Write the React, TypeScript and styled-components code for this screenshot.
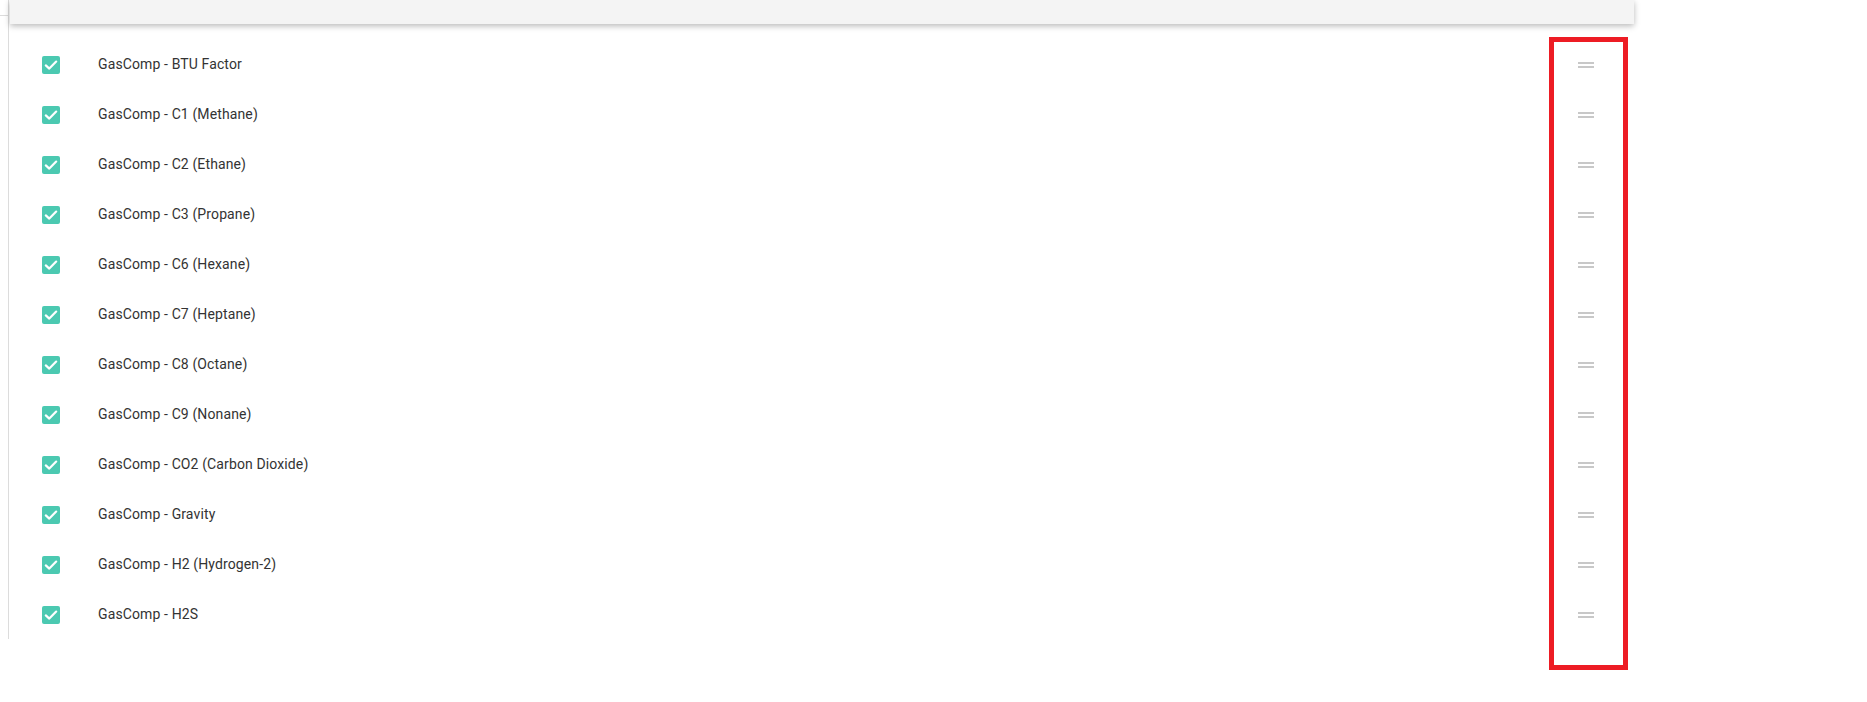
import React from "react";
import styled, { createGlobalStyle } from "styled-components";

const GlobalStyle = createGlobalStyle`
  html, body { margin: 0; padding: 0; background: #ffffff; }
  body { font-family: Roboto, "Liberation Sans", Arial, sans-serif; }
`;

const Page = styled.div`
  position: relative;
  display: flex;
  width: 1867px;
  height: 702px;
`;

const Gutter = styled.div`
  position: relative;
  width: 8px;
  height: 639px;
  border-right: 1px solid #dcdcdc;
  margin-right: 1px;
  flex-shrink: 0;
`;

const GutterTick = styled.div`
  margin-top: 15px;
  height: 1px;
  background: #dcdcdc;
`;

const Panel = styled.div`
  width: 1624px;
  display: flex;
  flex-direction: column;
`;

const Header = styled.div`
  height: 24px;
  background: #f4f4f4;
  box-shadow: 0 2px 6px rgba(0, 0, 0, 0.28);
  position: relative;
  z-index: 1;
`;

const List = styled.ul`
  list-style: none;
  margin: 0;
  padding: 16px 0 0 0;
`;

const Row = styled.li`
  height: 50px;
  display: flex;
  align-items: center;
  padding: 0 40px 0 32px;
`;

const Box = styled.span`
  width: 18px;
  height: 18px;
  border-radius: 2px;
  background: #4bc9b1;
  display: flex;
  align-items: center;
  justify-content: center;
  flex-shrink: 0;
`;

const Label = styled.span`
  margin-left: 38px;
  flex: 1;
  font-size: 14px;
  line-height: 16px;
  padding-bottom: 3px;
  letter-spacing: 0.12px;
  color: #333333;
`;

const Handle = styled.span`
  width: 16px;
  display: flex;
  flex-direction: column;
  gap: 2px;
`;

const HandleBar = styled.span`
  display: block;
  height: 2px;
  background: #c8c8c8;
`;

const Highlight = styled.div`
  position: absolute;
  left: 1549px;
  top: 37px;
  width: 79px;
  height: 633px;
  box-sizing: border-box;
  border: 5px solid #ed1c24;
  pointer-events: none;
`;

const items = [
  "GasComp - BTU Factor",
  "GasComp - C1 (Methane)",
  "GasComp - C2 (Ethane)",
  "GasComp - C3 (Propane)",
  "GasComp - C6 (Hexane)",
  "GasComp - C7 (Heptane)",
  "GasComp - C8 (Octane)",
  "GasComp - C9 (Nonane)",
  "GasComp - CO2 (Carbon Dioxide)",
  "GasComp - Gravity",
  "GasComp - H2 (Hydrogen-2)",
  "GasComp - H2S",
];

const Check = () => (
  <svg width="18" height="18" viewBox="0 0 18 18">
    <path
      d="M3.8 9.4 L7.3 12.6 L14.2 5.6"
      fill="none"
      stroke="#ffffff"
      strokeWidth="2.2"
      strokeLinecap="round"
      strokeLinejoin="round"
    />
  </svg>
);

export default function App() {
  return (
    <>
      <GlobalStyle />
      <Page>
        <Gutter>
          <GutterTick />
        </Gutter>
        <Panel>
          <Header />
          <List>
            {items.map((t) => (
              <Row key={t}>
                <Box>
                  <Check />
                </Box>
                <Label>{t}</Label>
                <Handle>
                  <HandleBar />
                  <HandleBar />
                </Handle>
              </Row>
            ))}
          </List>
        </Panel>
        <Highlight />
      </Page>
    </>
  );
}
